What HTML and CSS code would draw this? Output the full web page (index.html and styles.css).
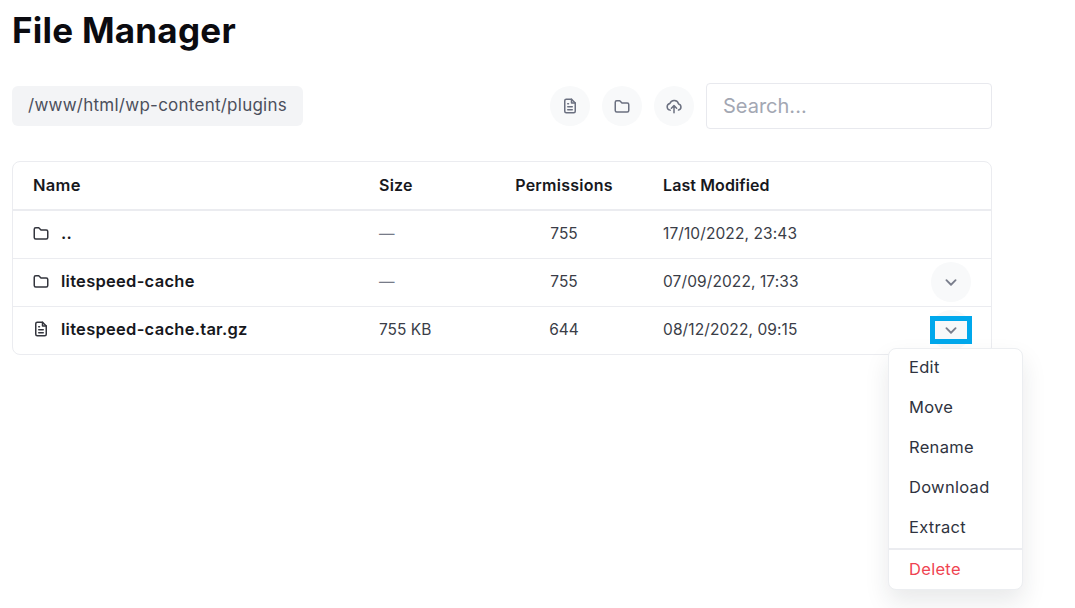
FILE: index.html
```html
<!DOCTYPE html>
<html lang="en">
<head>
<meta charset="utf-8">
<title>File Manager</title>
<link rel="stylesheet" href="styles.css">
</head>
<body>
<main class="page">
  <h1 class="title">File Manager</h1>
  <div class="toolbar">
    <div class="path">/www/html/wp-content/plugins</div>
    <div class="tools">
      <button class="round" aria-label="New file"><svg class="ico" viewBox="0 0 24 24"><path d="M7 3h7l5 5v11a2 2 0 0 1-2 2H7a2 2 0 0 1-2-2V5a2 2 0 0 1 2-2z"/><path d="M14 3v5h5M9 13h6M9 17h6M9 9h1"/></svg></button>
      <button class="round" aria-label="New folder"><svg class="ico" viewBox="0 0 24 24"><path d="M3 7a2 2 0 0 1 2-2h4l3 3h7a2 2 0 0 1 2 2v8a2 2 0 0 1-2 2H5a2 2 0 0 1-2-2z"/></svg></button>
      <button class="round" aria-label="Upload"><svg class="ico" viewBox="0 0 24 24"><path d="M7 17.500A4.500 4.500 0 0 1 6.500 8.600 6 6 0 0 1 18 9.200a4.200 4.200 0 0 1 0 8.200"/><path d="M12 21v-9M8.500 15l3.500-3.500 3.500 3.500"/></svg></button>
      <div class="search">Search...</div>
    </div>
  </div>
  <div class="table">
    <div class="row head">
      <div class="name">Name</div><div class="size">Size</div><div class="perm">Permissions</div><div class="date">Last Modified</div><div class="act"></div>
    </div>
    <div class="row">
      <div class="name"><svg class="ico dark" viewBox="0 0 24 24"><path d="M3 7a2 2 0 0 1 2-2h4l3 3h7a2 2 0 0 1 2 2v8a2 2 0 0 1-2 2H5a2 2 0 0 1-2-2z"/></svg>..</div><div class="size muted">—</div><div class="perm">755</div><div class="date">17/10/2022, 23:43</div><div class="act"></div>
    </div>
    <div class="row">
      <div class="name"><svg class="ico dark" viewBox="0 0 24 24"><path d="M3 7a2 2 0 0 1 2-2h4l3 3h7a2 2 0 0 1 2 2v8a2 2 0 0 1-2 2H5a2 2 0 0 1-2-2z"/></svg>litespeed-cache</div><div class="size muted">—</div><div class="perm">755</div><div class="date">07/09/2022, 17:33</div>
      <div class="act"><button class="round" aria-label="Actions"><svg class="chev" viewBox="0 0 24 24"><path d="M7 10l5 5 5-5"/></svg></button></div>
    </div>
    <div class="row">
      <div class="name"><svg class="ico dark" viewBox="0 0 24 24"><path d="M7 3h7l5 5v11a2 2 0 0 1-2 2H7a2 2 0 0 1-2-2V5a2 2 0 0 1 2-2z"/><path d="M14 3v5h5M9 13h6M9 17h6M9 9h1"/></svg>litespeed-cache.tar.gz</div><div class="size">755 KB</div><div class="perm">644</div><div class="date">08/12/2022, 09:15</div>
      <div class="act"><button class="round" aria-label="Actions"><svg class="chev" viewBox="0 0 24 24"><path d="M7 10l5 5 5-5"/></svg></button><span class="mark"></span></div>
    </div>
  </div>
  <ul class="menu">
    <li>Edit</li>
    <li>Move</li>
    <li>Rename</li>
    <li>Download</li>
    <li class="last">Extract</li>
    <li class="danger">Delete</li>
  </ul>
</main>
</body>
</html>
```
FILE: styles.css
```css
* { box-sizing: border-box; }
html, body { margin: 0; background: #fff; }
body { font-family: "Inter", "Liberation Sans", sans-serif; color: #2a2d36; overflow: hidden; height: 608px; }
.page { position: relative; width: 980px; margin-left: 12px; }
.title { margin: 0; height: 83px; padding-top: 9px; font-size: 35px; line-height: 43px; font-weight: 700; color: #0b0b10; letter-spacing: 0.25px; }
.toolbar { display: flex; justify-content: space-between; align-items: center; height: 46px; }
.path { width: 291px; height: 40px; padding: 0 16px; background: #f3f4f6; border-radius: 6px; font-size: 17px; letter-spacing: 0.25px; line-height: 39px; color: #4b4f5c; white-space: nowrap; }
.tools { display: flex; align-items: center; gap: 12px; }
.round { width: 40px; height: 40px; padding: 0; border: 0; border-radius: 50%; background: #f8f9fa; display: flex; align-items: center; justify-content: center; }
.ico { width: 18px; height: 18px; fill: none; stroke: #6b7080; stroke-width: 2; stroke-linecap: round; stroke-linejoin: round; }
.ico.dark { stroke: #33353d; margin: 0 11px 0 -1px; flex: none; }
.chev { width: 22px; height: 22px; fill: none; stroke: #7a7e8c; stroke-width: 2; stroke-linecap: round; stroke-linejoin: round; }
.search { width: 286px; height: 46px; padding: 0 16px; border: 1px solid #e8e9ee; border-radius: 4px; font-size: 20px; line-height: 44px; color: #a3a7b3; }
.table { margin-top: 32px; height: 194px; border: 1px solid #ebecf0; border-radius: 8px; }
.row { display: grid; grid-template-columns: 366px 100px 184px 1fr 60px; align-items: center; height: 48px; padding-bottom: 1px; border-top: 1px solid #ebecf0; font-size: 15.5px; color: #3a3d47; }
.row > div:not(.act) { padding-bottom: 2px; }
.row.head { height: 49px; border-top: 0; border-bottom: 2px solid #ebecf0; font-weight: 600; color: #17181d; font-size: 16px; letter-spacing: 0.25px; }
.row.head > div:not(.act) { padding-bottom: 0; }
.row.head + .row { height: 47px; border-top: 0; }
.name { display: flex; align-items: center; padding-left: 20px; font-size: 16.5px; letter-spacing: 0.27px; font-weight: 600; color: #17181d; }
.perm { text-align: center; padding-right: 14px; }
.date { letter-spacing: 0.1px; }
.muted { color: #777b88; }
.act { position: relative; display: flex; justify-content: center; padding-right: 20px; }
.mark { position: absolute; left: -1px; top: 6px; width: 42px; height: 28px; border: 5px solid #00a8ec; }
.menu { position: absolute; left: 876px; top: 348px; width: 135px; height: 242px; margin: 0; padding: 0; list-style: none; background: #fff; border: 1px solid #eceef1; border-radius: 8px; box-shadow: 0 12px 24px rgba(30, 35, 50, 0.1); font-size: 16.5px; letter-spacing: 0.3px; color: #2f3340; }
.menu li { height: 40px; line-height: 37px; padding-left: 20px; }
.menu li.last { height: 39px; }
.menu li.danger { height: 42px; border-top: 2px solid #ebecf0; color: #ef4452; line-height: 38px; }
```
